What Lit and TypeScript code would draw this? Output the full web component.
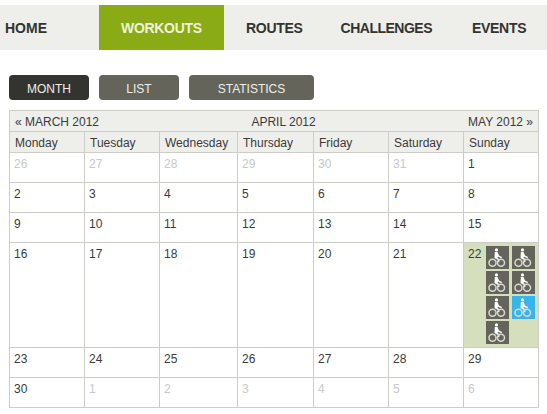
import { LitElement, html, css, svg } from 'lit';
import { customElement } from 'lit/decorators.js';

const DAYS = ['Monday', 'Tuesday', 'Wednesday', 'Thursday', 'Friday', 'Saturday', 'Sunday'];

type Day = { n: number; off?: boolean };
const d = (n: number): Day => ({ n });
const o = (n: number): Day => ({ n, off: true });

const WEEKS: Day[][] = [
  [o(26), o(27), o(28), o(29), o(30), o(31), d(1)],
  [d(2), d(3), d(4), d(5), d(6), d(7), d(8)],
  [d(9), d(10), d(11), d(12), d(13), d(14), d(15)],
  [d(16), d(17), d(18), d(19), d(20), d(21), d(22)],
  [d(23), d(24), d(25), d(26), d(27), d(28), d(29)],
  [d(30), o(1), o(2), o(3), o(4), o(5), o(6)],
];

// 22 april has seven rides, the sixth one is selected
const RIDES = [false, false, false, false, false, true, false];

const bike = svg`
  <svg viewBox="0 0 23 23" width="23" height="23" fill="none">
    <circle cx="10.500" cy="3.900" r="1.600" fill="#fff" />
    <path d="M8.800 6h2.700l1.500 3.500 3 1.500-.5 1.300-3.500-1.500-.5 1 1.900 1.400V16H12v-2l-3.500-2z" fill="#fff" />
    <circle cx="6.500" cy="16.800" r="3.500" stroke="#d8d8d2" stroke-width="1.500" />
    <circle cx="15" cy="16.800" r="3.500" stroke="#d8d8d2" stroke-width="1.500" />
  </svg>
`;

@customElement('app-root')
export class AppRoot extends LitElement {
  static styles = css`
    :host {
      display: block;
      width: 547px;
      height: 414px;
      overflow: hidden;
      background: #fff;
      padding-top: 5px;
      box-sizing: border-box;
      font-family: 'Liberation Sans', Arial, sans-serif;
      color: #3a3a3a;
    }
    .nav {
      display: flex;
      height: 45px;
      background: #eeefea;
      align-items: stretch;
      font-size: 14px;
      font-weight: bold;
      letter-spacing: -0.3px;
      color: #333330;
    }
    .nav a {
      display: flex;
      align-items: center;
    }
    .nav .home { padding-left: 5px; width: 99px; box-sizing: border-box; letter-spacing: 0; }
    .nav .active {
      width: 125px;
      box-sizing: border-box;
      padding-left: 22px;
      background: #8aaa16;
      color: #eef2d8;
    }
    .nav .routes { padding-left: 22px; }
    .nav .challenges { padding-left: 38px; letter-spacing: -0.5px; }
    .nav .events { padding-left: 40px; }
    .tabs {
      display: flex;
      gap: 10px;
      margin: 25px 0 10px 9px;
    }
    .tab {
      display: flex;
      align-items: center;
      justify-content: center;
      width: 80px;
      height: 25px;
      box-sizing: border-box;
      padding-top: 2px;
      border-radius: 4px;
      background: #64645a;
      color: #eeefea;
      font-size: 12px;
    }
    .tab.on { background: #33332f; }
    .tab.wide { width: 125px; }
    table {
      margin-left: 9px;
      width: 530px;
      table-layout: fixed;
      border-collapse: collapse;
      font-size: 12px;
      color: #3a3a3a;
    }
    col { width: 75px; }
    col.wed { width: 78px; }
    col.thu { width: 76px; }
    th, td {
      border: 1px solid #cdcdc8;
      padding: 0;
      font-weight: normal;
      text-align: left;
    }
    .bar th {
      height: 19px;
      background: #eeefea;
      padding: 1px 5px 0;
    }
    .months {
      display: flex;
      justify-content: space-between;
    }
    .names th { height: 19px; background: #eeefea; padding: 1px 0 0 5px; }
    td { height: 29px; vertical-align: top; }
    tr.tall td { height: 104px; }
    .num { display: block; padding: 4px 0 0 4px; line-height: 14px; }
    .off .num { color: #c8c8c8; }
    .busy { background: #d5dfbd; }
    .busy .inner { display: flex; }
    .busy .num { width: 18px; flex: none; }
    .rides {
      display: grid;
      grid-template-columns: 23px 23px;
      column-gap: 3px;
      row-gap: 2px;
      padding-top: 3px;
    }
    .ride { width: 23px; height: 23px; background: #64645a; }
    .ride.sel { background: #35b5ec; }
    svg { display: block; }
  `;

  render() {
    return html`
      <div class="nav">
        <a class="home">HOME</a>
        <a class="active">WORKOUTS</a>
        <a class="routes">ROUTES</a>
        <a class="challenges">CHALLENGES</a>
        <a class="events">EVENTS</a>
      </div>
      <div class="tabs">
        <div class="tab on">MONTH</div>
        <div class="tab">LIST</div>
        <div class="tab wide">STATISTICS</div>
      </div>
      <table>
        <colgroup>
          <col /><col /><col class="wed" /><col class="thu" /><col /><col /><col />
        </colgroup>
        <thead>
          <tr class="bar">
            <th colspan="7">
              <div class="months">
                <span>« MARCH 2012</span>
                <span>APRIL 2012</span>
                <span>MAY 2012 »</span>
              </div>
            </th>
          </tr>
          <tr class="names">${DAYS.map((n) => html`<th>${n}</th>`)}</tr>
        </thead>
        <tbody>
          ${WEEKS.map(
            (week, i) => html`
              <tr class=${i === 3 ? 'tall' : ''}>
                ${week.map((day) => this.renderDay(day))}
              </tr>
            `,
          )}
        </tbody>
      </table>
    `;
  }

  renderDay(day: Day) {
    if (day.n === 22) {
      return html`
        <td class="busy">
          <div class="inner">
            <span class="num">${day.n}</span>
            <div class="rides">
              ${RIDES.map((sel) => html`<div class="ride ${sel ? 'sel' : ''}">${bike}</div>`)}
            </div>
          </div>
        </td>
      `;
    }
    return html`<td class=${day.off ? 'off' : ''}><span class="num">${day.n}</span></td>`;
  }
}
